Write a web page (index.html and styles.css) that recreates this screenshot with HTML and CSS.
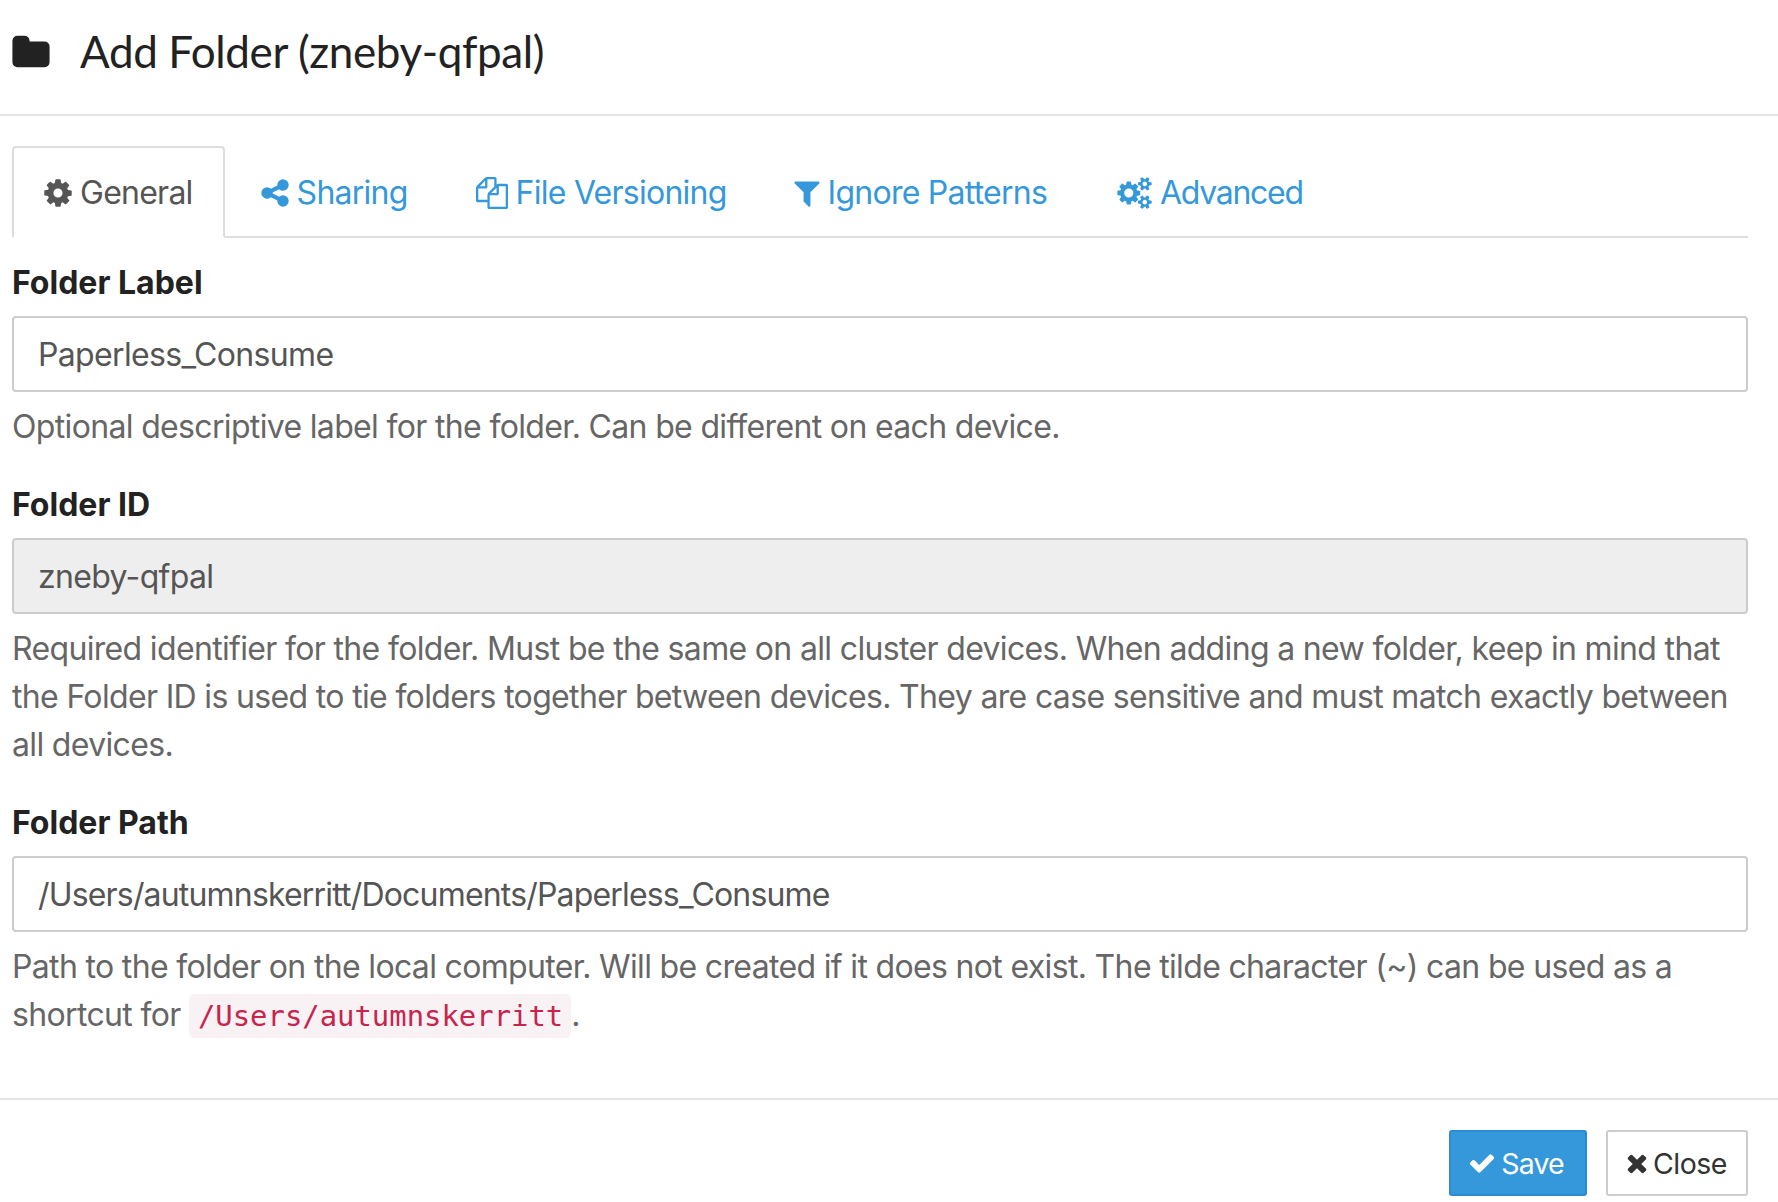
FILE: index.html
```html
<!DOCTYPE html>
<html lang="en">
<head>
    <meta charset="UTF-8">
    <title>Add Folder</title>
    <link rel="stylesheet" href="styles.css">
</head>
<body>
    <!-- Modal Header -->
    <div class="modal-header">
        <svg class="title-icon" viewBox="0 0 1792 1792"><path d="M1728 608v704q0 92-66 158t-158 66h-1216q-92 0-158-66t-66-158v-960q0-92 66-158t158-66h320q92 0 158 66t66 158v32h672q92 0 158 66t66 158z"/></svg>
        <h4 class="modal-title">Add Folder (zneby-qfpal)</h4>
    </div>

    <!-- Modal Body -->
    <div class="modal-body">
        <ul class="tabs">
            <li class="tab active">
                <svg class="icon" viewBox="0 0 1792 1792"><path d="M1152 896q0-106-75-181t-181-75-181 75-75 181 75 181 181 75 181-75 75-181zm512-109v222q0 12-8 23t-20 13l-185 28q-19 54-39 91 35 50 107 138 10 12 10 25t-9 23q-27 37-99 108t-94 71q-12 0-26-9l-138-108q-44 23-91 38-16 136-29 186-7 28-36 28h-222q-14 0-24.500-8.500t-11.500-21.500l-28-184q-49-16-90-37l-141 107q-10 9-25 9-14 0-25-11-126-114-165-168-7-10-7-23 0-12 8-23 15-21 51-66.500t54-70.500q-27-50-41-99l-183-27q-13-2-21-12.500t-8-23.500v-222q0-12 8-23t19-13l186-28q14-46 39-92-40-57-107-138-10-12-10-24 0-10 9-23 26-36 98.500-107.500t94.500-71.500q13 0 26 10l138 107q44-23 91-38 16-136 29-186 7-28 36-28h222q14 0 24.500 8.500t11.500 21.500l28 184q49 16 90 37l142-107q9-9 24-9 13 0 25 10 129 119 165 170 7 8 7 22 0 12-8 23-15 21-51 66.500t-54 70.500q26 50 41 98l183 28q13 2 21 12.500t8 23.500z"/></svg>
                General
            </li>
            <li class="tab">
                <svg class="icon" viewBox="0 0 1792 1792"><path d="M1344 1024q133 0 226.500 93.500t93.500 226.500-93.500 226.500-226.500 93.500-226.500-93.500-93.500-226.500q0-12 2-34l-360-180q-92 86-218 86-133 0-226.500-93.500t-93.500-226.500 93.500-226.500 226.500-93.500q126 0 218 86l360-180q-2-22-2-34 0-133 93.500-226.500t226.500-93.500 226.500 93.500 93.500 226.500-93.500 226.500-226.500 93.500q-126 0-218-86l-360 180q2 22 2 34t-2 34l360 180q92-86 218-86z"/></svg>
                Sharing
            </li>
            <li class="tab">
                <svg class="icon icon-files" viewBox="0 0 1792 1792"><path d="M1696 384q40 0 68 28t28 68v1216q0 40-28 68t-68 28h-960q-40 0-68-28t-28-68v-288h-544q-40 0-68-28t-28-68v-672q0-40 20-88t48-76l408-408q28-28 76-48t88-20h416q40 0 68 28t28 68v328q68-40 128-40h416zm-544 213l-299 299h299v-299zm-640-384l-299 299h299v-299zm196 647l316-316v-416h-384v416q0 40-28 68t-68 28h-416v640h512v-256q0-40 20-88t48-76zm956 804v-1152h-384v416q0 40-28 68t-68 28h-416v640h896z"/></svg>
                File Versioning
            </li>
            <li class="tab">
                <svg class="icon icon-filter" viewBox="0 0 1792 1792"><path d="M1595 295q17 41-14 70l-493 493v742q0 42-39 59-13 5-25 5-27 0-45-19l-256-256q-19-19-19-45v-486l-493-493q-31-29-14-70 17-39 59-39h1280q42 0 59 39z"/></svg>
                Ignore Patterns
            </li>
            <li class="tab">
                <svg class="icon icon-wide" viewBox="0 0 1920 1792"><path d="M896 896q0-106-75-181t-181-75-181 75-75 181 75 181 181 75 181-75 75-181zm768 512q0-52-38-90t-90-38-90 38-38 90q0 53 37.500 90.500t90.500 37.500 90.500-37.500 37.500-90.500zm0-1024q0-52-38-90t-90-38-90 38-38 90q0 53 37.500 90.500t90.500 37.500 90.500-37.500 37.500-90.500zm-384 421v185q0 10-7 19.500t-16 10.500l-155 24q-11 35-32 76 34 48 90 115 7 11 7 20 0 12-7 19-23 30-82.500 89.500t-78.500 59.500q-11 0-21-7l-115-90q-37 19-77 31-11 108-23 155-7 24-30 24h-186q-11 0-20-7.500t-10-17.500l-23-153q-34-10-75-31l-118 89q-7 7-20 7-11 0-21-8-144-133-144-160 0-9 7-19 10-14 41-53t47-61q-23-44-35-82l-152-24q-10-1-17-9.500t-7-19.500v-185q0-10 7-19.500t16-10.500l155-24q11-35 32-76-34-48-90-115-7-11-7-20 0-12 7-20 22-30 82-89t79-59q11 0 21 7l115 90q34-18 77-32 11-108 23-154 7-24 30-24h186q11 0 20 7.500t10 17.500l23 153q34 10 75 31l118-89q8-7 20-7 11 0 21 8 144 133 144 160 0 8-7 19-12 16-42 54t-45 60q23 48 34 82l152 23q10 2 17 10.500t7 19.500zm640 533v140q0 16-149 31-12 27-30 52 51 113 51 138 0 4-4 7-122 71-124 71-8 0-46-47t-52-68q-20 2-30 2t-30-2q-14 21-52 68t-46 47q-2 0-124-71-4-3-4-7 0-25 51-138-18-25-30-52-149-15-149-31v-140q0-16 149-31 13-29 30-52-51-113-51-138 0-4 4-7 4-2 35-20t59-34 30-16q8 0 46 46.500t52 67.500q20-2 30-2t30 2q51-71 92-112l6-2q4 0 124 70 4 3 4 7 0 25-51 138 17 23 30 52 149 15 149 31zm0-1024v140q0 16-149 31-12 27-30 52 51 113 51 138 0 4-4 7-122 71-124 71-8 0-46-47t-52-68q-20 2-30 2t-30-2q-14 21-52 68t-46 47q-2 0-124-71-4-3-4-7 0-25 51-138-18-25-30-52-149-15-149-31v-140q0-16 149-31 13-29 30-52-51-113-51-138 0-4 4-7 4-2 35-20t59-34 30-16q8 0 46 46.500t52 67.500q20-2 30-2t30 2q51-71 92-112l6-2q4 0 124 70 4 3 4 7 0 25-51 138 17 23 30 52 149 15 149 31z"/></svg>
                Advanced
            </li>
        </ul>

        <div class="form-group">
            <label class="field-label">Folder Label</label>
            <input class="field" type="text" value="Paperless_Consume">
            <p class="help">Optional descriptive label for the folder. Can be different on each device.</p>
        </div>

        <div class="form-group">
            <label class="field-label">Folder ID</label>
            <input class="field" type="text" value="zneby-qfpal" disabled>
            <p class="help">Required identifier for the folder. Must be the same on all cluster devices. When adding a new folder, keep in mind that the Folder ID is used to tie folders together between devices. They are case sensitive and must match exactly between all devices.</p>
        </div>

        <div class="form-group">
            <label class="field-label">Folder Path</label>
            <input class="field field-path" type="text" value="/Users/autumnskerritt/Documents/Paperless_Consume">
            <p class="help">Path to the folder on the local computer. Will be created if it does not exist. The tilde character (~) can be used as a shortcut for <code>/Users/autumnskerritt</code>.</p>
        </div>
    </div>

    <!-- Modal Footer -->
    <div class="modal-footer">
        <button class="btn btn-save">
            <svg class="icon" viewBox="0 0 1792 1792"><path d="M1671 566q0 40-28 68l-724 724-136 136q-28 28-68 28t-68-28l-136-136-362-362q-28-28-28-68t28-68l136-136q28-28 68-28t68 28l294 295 656-657q28-28 68-28t68 28l136 136q28 28 28 68z"/></svg>
            Save
        </button>
        <button class="btn btn-close">
            <svg class="icon" viewBox="0 0 1792 1792"><path d="M1490 1322q0 40-28 68l-136 136q-28 28-68 28t-68-28l-294-294-294 294q-28 28-68 28t-68-28l-136-136q-28-28-28-68t28-68l294-294-294-294q-28-28-28-68t28-68l136-136q28-28 68-28t68 28l294 294 294-294q28-28 68-28t68 28l136 136q28 28 28 68t-28 68l-294 294 294 294q28 28 28 68z"/></svg>
            Close
        </button>
    </div>
</body>
</html>
```

FILE: styles.css
```css
body {
    margin: 0;
    padding: 0;
    background-color: #fff;
    font-family: Inter, 'Noto Sans', sans-serif;
    font-size: 32px;
    line-height: 48px;
    letter-spacing: -0.66px;
    color: #222;
    overflow: hidden;
}
.icon {
    width: 32px;
    height: 32px;
    fill: currentColor;
    flex-shrink: 0;
}
.icon-files {
    margin-right: 2px;
}
.icon-filter {
    margin: 0 -1px 0 -4px;
}
.icon-wide {
    width: 35px;
    margin: 0 2px 0 2px;
}
/* Header */
.modal-header {
    display: flex;
    align-items: center;
    gap: 29px;
    box-sizing: border-box;
    height: 116px;
    padding: 0 0 9px 11px;
    border-bottom: 2px solid #e5e5e5;
}
.title-icon {
    width: 40px;
    height: 40px;
    fill: #222;
}
.modal-title {
    margin: 0 0 4px;
    font-family: Lato, sans-serif;
    font-size: 44px;
    font-weight: 400;
    letter-spacing: -0.4px;
    color: #222;
}
/* Tabs */
.modal-body {
    padding: 30px 30px 49px 12px;
}
.tabs {
    display: flex;
    list-style: none;
    margin: 0;
    padding: 0;
    height: 90px;
    border-bottom: 2px solid #ddd;
}
.tab {
    display: flex;
    align-items: center;
    gap: 6px;
    padding: 2px 34px 0;
    color: #3498db;
    height: 92px;
    box-sizing: border-box;
    white-space: nowrap;
    letter-spacing: -0.75px;
}
.tab:last-child {
    letter-spacing: -1.3px;
}
.tab.active {
    color: #555;
    background-color: #fff;
    border: 2px solid #ddd;
    border-bottom-color: #fff;
    border-radius: 4px 4px 0 0;
    padding: 2px 30px 0 28px;
}
/* Form */
.form-group {
    margin-bottom: 9px;
}
.field-label {
    display: block;
    font-weight: 700;
    letter-spacing: 0;
    margin-bottom: 9px;
    padding-top: 21px;
}
.field {
    display: block;
    box-sizing: border-box;
    width: 100%;
    height: 76px;
    padding: 0 24px;
    border: 2px solid #ccc;
    border-radius: 4px;
    font-family: inherit;
    font-size: 32px;
    letter-spacing: -0.66px;
    color: #555;
    background-color: #fff;
}
.field-path {
    letter-spacing: -0.82px;
}
.field:disabled {
    background-color: #eee;
    opacity: 1;
}
.help {
    margin: 11px 0 0;
    color: #666;
}
code {
    padding: 5px 8px 5px 9px;
    font-family: 'DejaVu Sans Mono', monospace;
    font-size: 28.9px;
    letter-spacing: 0;
    color: #c7254e;
    background-color: #f9f2f4;
    border-radius: 5px;
}
/* Footer */
.modal-footer {
    display: flex;
    justify-content: flex-end;
    gap: 19px;
    padding: 30px 30px 0 0;
    border-top: 2px solid #e5e5e5;
}
.btn {
    display: flex;
    align-items: center;
    justify-content: center;
    gap: 6px;
    height: 66px;
    box-sizing: border-box;
    padding: 0 20px;
    border: 2px solid #ccc;
    border-radius: 3px;
    background-color: #fff;
    color: #333;
    font-family: inherit;
    font-size: 28.5px;
    letter-spacing: -0.5px;
}
.btn .icon {
    width: 28px;
    height: 28px;
}
.btn-save {
    width: 138px;
    gap: 5px;
    padding: 0 23px 0 19px;
    background-color: #3498db;
    border-color: #2a8bd0;
    color: #fff;
    letter-spacing: -0.9px;
}
.btn-close {
    width: 142px;
    gap: 2px;
    padding: 0 24px 0 20px;
}
```
